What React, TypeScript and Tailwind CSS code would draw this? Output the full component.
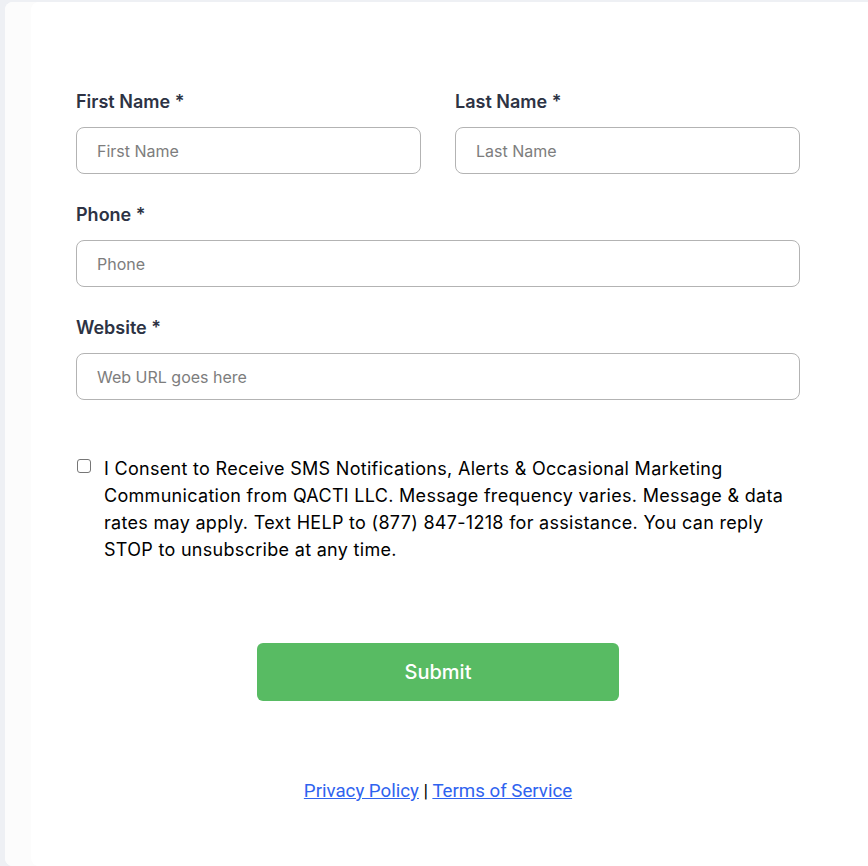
import { useState } from 'react';

const Field = ({ label, placeholder }: { label: string; placeholder: string }) => (
  <div className="flex flex-col flex-1">
    <label className="text-[18px] leading-6 font-semibold text-[#2d3344] mb-[13px]">
      {label} <span>*</span>
    </label>
    <input
      type="text"
      placeholder={placeholder}
      className="h-[47px] w-full rounded-lg border border-[#b3b3b3] bg-white px-[20px] text-[16px] text-gray-800 placeholder:text-[#7d7d7d] outline-none"
    />
  </div>
);

const App = () => {
  const [agree, setAgree] = useState(false);

  return (
    <div className="min-h-[866px] bg-[#eef0f4] pl-[5px] pt-[2px] font-['Inter',sans-serif]">
      <div className="min-h-[864px] rounded-tl-lg rounded-bl-lg bg-white shadow-[inset_26px_0_0_#fcfcfc] pl-[71px] pr-[68px] pt-[88px]">
        <form className="w-[724px]" onSubmit={(e) => e.preventDefault()}>
          <div className="flex flex-col gap-[29px]">
            <div className="flex gap-[34px]">
              <Field label="First Name" placeholder="First Name" />
              <Field label="Last Name" placeholder="Last Name" />
            </div>
            <Field label="Phone" placeholder="Phone" />
            <Field label="Website" placeholder="Web URL goes here" />
          </div>

          <div className="mt-[55px] flex items-start gap-[13px]">
            <input
              type="checkbox"
              checked={agree}
              onChange={() => setAgree(!agree)}
              className="mt-[4px] ml-[1px] h-[14px] w-[14px] shrink-0 appearance-none rounded-[3px] border border-[#767676] bg-white"
            />
            <p className="text-[18px] leading-[27px] tracking-[0.3px] text-black pr-[4px]">
              I Consent to Receive SMS Notifications, Alerts &amp; Occasional Marketing Communication from QACTI LLC.
              Message frequency varies. Message &amp; data rates may apply. Text HELP to (877) 847-1218 for
              assistance. You can reply STOP to unsubscribe at any time.
            </p>
          </div>

          <div className="mt-[80px] flex justify-center">
            <button
              type="submit"
              className="h-[58px] w-[362px] rounded-md bg-[#58bb63] text-[20px] font-medium text-white"
            >
              Submit
            </button>
          </div>

          <div className="mt-[77px] text-center font-['Roboto',sans-serif] text-[18.7px] leading-[26px] text-black">
            <a href="#" className="text-[#2f63ef] underline">Privacy Policy</a>
            {' | '}
            <a href="#" className="text-[#2f63ef] underline">Terms of Service</a>
          </div>
        </form>
      </div>
    </div>
  );
};

export default App;
